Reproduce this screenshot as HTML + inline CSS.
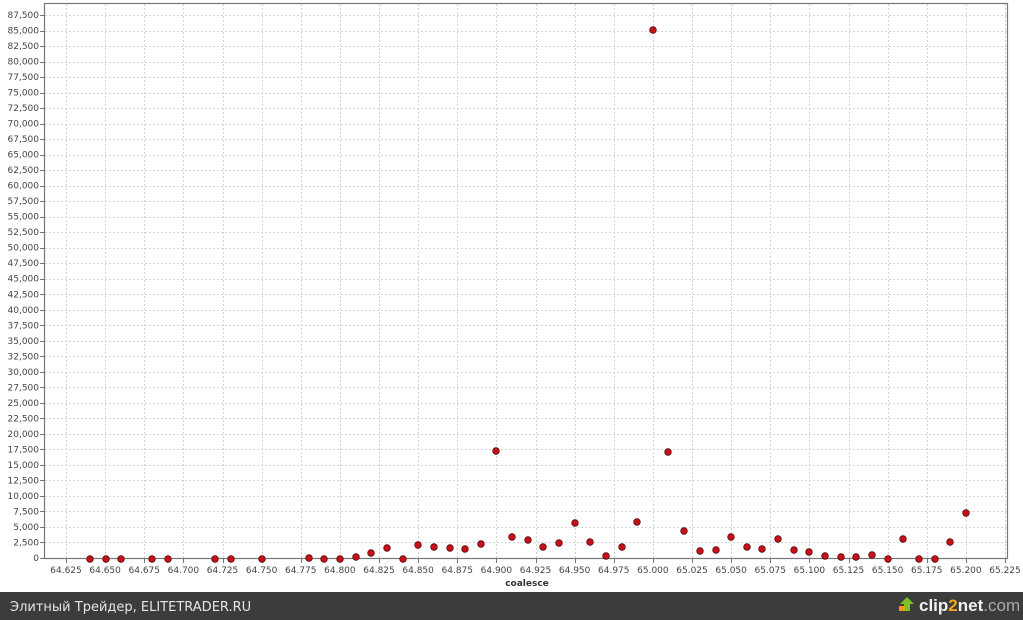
<!DOCTYPE html>
<html><head><meta charset="utf-8"><style>
html,body{margin:0;padding:0;background:#fff;width:1023px;height:620px;overflow:hidden}
svg{display:block}
.t{font-family:"DejaVu Sans","Liberation Sans",sans-serif;font-size:9px;fill:#444}
</style></head><body>
<svg width="1023" height="620" xmlns="http://www.w3.org/2000/svg">
<rect width="1023" height="620" fill="#fff"/>
<g id="grid" stroke="#d4d4d4" stroke-width="1" stroke-dasharray="2,2"></g>
<rect x="44.5" y="3.5" width="963" height="555" fill="none" stroke="#777" stroke-width="1.2"/>
<g id="ylab"></g><g id="xlab"></g><g id="pts"></g>
<text x="527" y="586" text-anchor="middle" font-family="DejaVu Sans,Liberation Sans,sans-serif" font-size="9" font-weight="bold" fill="#333">coalesce</text>
<rect x="0" y="592" width="1023" height="28" fill="#3c3c3c"/>
<text x="10" y="611" font-family="DejaVu Sans,Liberation Sans,sans-serif" font-size="13" fill="#e6e6e6">Элитный Трейдер, ELITETRADER.RU</text>
<polygon points="907,597 914,604 910,604 910,611 904,611 904,604 900,604" fill="#7bbf2a"/>
<rect x="899" y="606" width="6" height="5" fill="#f29a1a"/>
<text x="919" y="611" font-family="Liberation Sans,sans-serif" font-size="17" font-weight="bold" fill="#f2f2f2">clip<tspan fill="#f2a51a">2</tspan>net<tspan fill="#aaa" font-weight="normal">.com</tspan></text>
</svg>
<script>
var ns="http://www.w3.org/2000/svg";
function el(p,n,a,t){var e=document.createElementNS(ns,n);for(var k in a)e.setAttribute(k,a[k]);if(t)e.textContent=t;document.getElementById(p).appendChild(e);}
for(var i=0;i<=35;i++){var y=558-i*15.514;var yy=Math.round(y)+0.5;
 if(i>0)el("grid","line",{x1:45,x2:1007,y1:yy,y2:yy});
 el("ylab","line",{x1:40,x2:44,y1:yy,y2:yy,stroke:"#777"});
 el("ylab","text",{x:39,y:y+3,"text-anchor":"end","class":"t"},(i*2500).toLocaleString("en-US"));}
for(var j=0;j<=24;j++){var x=66+j*39.125;var xx=Math.round(x)+0.5;
 el("grid","line",{x1:xx,x2:xx,y1:4,y2:558});
 el("xlab","line",{x1:xx,x2:xx,y1:559,y2:563,stroke:"#777"});
 el("xlab","text",{x:x,y:573,"text-anchor":"middle","class":"t"},(64.625+j*0.025).toFixed(3));}
var P=[[90,559],[106,559],[121,559],[152,559],[168,559],[215,559],[231,559],[262,559],[309,558],[324,559],[340,559],[356,557],[371,553],[387,548],[403,559],[418,545],[434,547],[450,548],[465,549],[481,544],[496,451],[512,537],[528,540],[543,547],[559,543],[575,523],[590,542],[606,556],[622,547],[637,522],[653,30],[668,452],[684,531],[700,551],[716,550],[731,537],[747,547],[762,549],[778,539],[794,550],[809,552],[825,556],[841,557],[856,557],[872,555],[888,559],[903,539],[919,559],[935,559],[950,542],[966,513]];
P.forEach(function(p){el("pts","circle",{cx:p[0],cy:p[1],r:3.3,fill:"#c8101a",stroke:"#5a0a0a","stroke-width":0.8});});
</script>
</body></html>
